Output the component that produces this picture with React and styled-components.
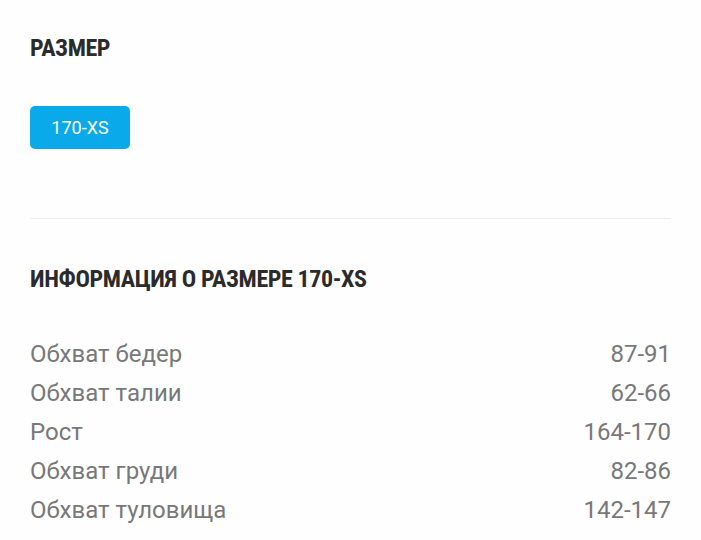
import React from 'react';
import styled, { createGlobalStyle } from 'styled-components';

const GlobalStyle = createGlobalStyle`
  html, body {
    margin: 0;
    padding: 0;
    background: #fefefe;
  }
  body {
    font-family: Roboto, 'Noto Sans', sans-serif;
  }
`;

const Page = styled.div`
  width: 701px;
  height: 540px;
  box-sizing: border-box;
  padding: 0 30px 0 30px;
  overflow: hidden;
`;

const Heading = styled.h2`
  margin: 0;
  font-family: Roboto, sans-serif;
  font-weight: 700;
  font-stretch: condensed;
  font-size: 24px;
  line-height: 28px;
  color: #2b2b2b;
  text-transform: uppercase;
  letter-spacing: -0.4px;
`;

const SizeSection = styled.section`
  padding-top: 34px;
  padding-bottom: 69px;
  border-bottom: 1px solid #ececec;
`;

const Chips = styled.div`
  display: flex;
  gap: 10px;
  margin-top: 44px;
`;

const Chip = styled.button`
  width: 100px;
  height: 43px;
  border: none;
  border-radius: 5px;
  background: ${p => (p.$active ? '#0aaaea' : '#f2f2f2')};
  color: ${p => (p.$active ? '#ffffff' : '#333')};
  font-family: Roboto, sans-serif;
  font-size: 18px;
  padding: 0;
  cursor: pointer;
`;

const InfoSection = styled.section`
  padding-top: 46px;
`;

const Rows = styled.div`
  margin-top: 42px;
  display: flex;
  flex-direction: column;
`;

const Row = styled.div`
  display: flex;
  justify-content: space-between;
  font-family: Roboto, sans-serif;
  font-size: 24px;
  line-height: 39px;
  color: #787878;
`;

const rows = [
  ['Обхват бедер', '87-91'],
  ['Обхват талии', '62-66'],
  ['Рост', '164-170'],
  ['Обхват груди', '82-86'],
  ['Обхват туловища', '142-147'],
];

export default function App() {
  return (
    <>
      <GlobalStyle />
      <Page>
        <SizeSection>
          <Heading>Размер</Heading>
          <Chips>
            <Chip $active>170-XS</Chip>
          </Chips>
        </SizeSection>
        <InfoSection>
          <Heading>Информация о размере 170-XS</Heading>
          <Rows>
            {rows.map(([label, value]) => (
              <Row key={label}>
                <span>{label}</span>
                <span>{value}</span>
              </Row>
            ))}
          </Rows>
        </InfoSection>
      </Page>
    </>
  );
}
